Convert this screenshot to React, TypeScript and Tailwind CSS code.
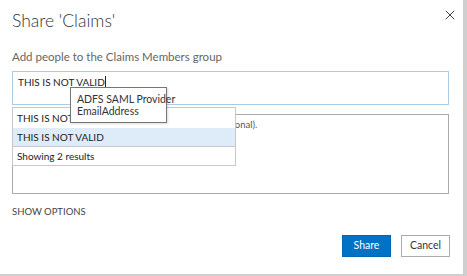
import { X } from 'lucide-react';

const font = { fontFamily: 'Lato, "Open Sans", sans-serif' };

const App = () => {
  return (
    <div className="w-[467px] h-[276px] bg-[#cfcfcf] overflow-hidden" style={font}>
      <div className="relative w-[463px] h-[274px] bg-white pl-3 pr-[13px]">
        {/* Header */}
        <div className="flex items-start justify-between pt-[10px]">
          <h1 className="text-[17.5px] leading-[22px] font-light text-[#333]">Share 'Claims'</h1>
          <button className="-mt-[3px] -mr-[8px] text-[#333]">
            <X className="w-[16px] h-[16px]" strokeWidth={1.4} />
          </button>
        </div>

        <p className="mt-[17px] text-[11.5px] leading-[16px] text-[#666]">
          Add people to the Claims Members group
        </p>

        {/* People picker */}
        <div className="mt-[6px] w-[437px] h-[34px] border border-[#a9cbe8] px-[5px] pt-[1px] leading-[14px]">
          <span className="text-[10px] text-[#222] align-middle">THIS IS NOT VALID</span>
          <span className="inline-block w-px h-[12px] bg-[#222] align-middle" />
        </div>

        {/* Message */}
        <div className="mt-[9px] w-[437px] h-[80px] border border-[#ababab] px-[5px] pt-[3px]">
          <p className="text-[9.5px] leading-[14px] text-[#555]">
            Include a personal message with this invitation (Optional).
          </p>
        </div>

        <div className="mt-[11px] text-[9.5px] leading-[14px] text-[#444]">SHOW OPTIONS</div>

        <div className="mt-[16px] flex justify-end gap-[10px]">
          <button className="w-[49px] h-[22px] bg-[#0072c6] text-white text-[10.5px] border border-[#0067b3]">
            Share
          </button>
          <button className="w-[49px] h-[22px] bg-white text-[#333] text-[10.5px] border border-[#ababab]">
            Cancel
          </button>
        </div>

        {/* Suggestions dropdown */}
        <div className="absolute left-3 top-[107px] w-[224px] bg-white border border-[#c8c8c8] text-[10px] text-[#222]">
          <div className="h-[20px] px-[4px] pt-[1px] flex items-center">THIS IS NOT VALID</div>
          <div className="h-[18px] px-[4px] flex items-center bg-[#deecf9]">THIS IS NOT VALID</div>
          <div className="h-[19px] px-[4px] flex items-center border-t border-[#c8c8c8]">
            Showing 2 results
          </div>
        </div>

        {/* Tooltip */}
        <div className="absolute left-[70px] top-[87px] w-[97px] h-[36px] bg-white border border-[#767676] shadow-[1px_1px_2px_rgba(0,0,0,0.15)] px-[6px] pt-[5px] text-[10.5px] leading-[12px] text-[#333] whitespace-nowrap">
          <div>ADFS SAML Provider</div>
          <div>EmailAddress</div>
        </div>
      </div>
    </div>
  );
};

export default App;
